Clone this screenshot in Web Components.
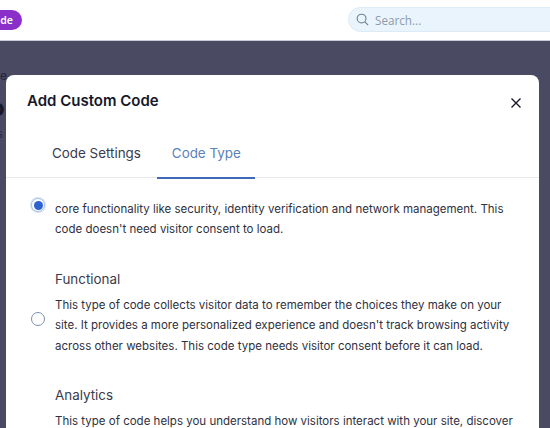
<!DOCTYPE html>
<html>
<head>
<meta charset="utf-8">
<style>
  html, body { margin: 0; height: 100%; overflow: hidden; background: #4a4b63; }
  body { font-family: Inter, "Liberation Sans", sans-serif; color: #2f3040; }
</style>
</head>
<body>
<app-topbar></app-topbar>
<app-backdrop>
  <code-modal heading="Add Custom Code">
    <code-option checked>core functionality like security, identity verification and network management. This code doesn't need visitor consent to load.</code-option>
    <code-option title="Functional">This type of code collects visitor data to remember the choices they make on your site. It provides a more personalized experience and doesn't track browsing activity across other websites. This code type needs visitor consent before it can load.</code-option>
    <code-option title="Analytics">This type of code helps you understand how visitors interact with your site, discover</code-option>
  </code-modal>
</app-backdrop>

<script>
class AppTopbar extends HTMLElement {
    constructor() {
        super();
        this.attachShadow({ mode: 'open' });
    }

    connectedCallback() {
        this.shadowRoot.innerHTML = `
            <style>
              :host { display: flex; align-items: center; justify-content: space-between; height: 40px; background: #fff; border-bottom: 1px solid #c9ccd6; overflow: hidden; box-sizing: content-box; }
              .upgrade { margin-left: -30px; width: 52px; height: 20px; box-sizing: border-box; padding-right: 9px; border-radius: 10px; background: #8a2fc9; color: #fff; font: 600 10.5px/20px "Noto Sans", sans-serif; text-align: right; }
              .search { display: flex; align-items: center; gap: 6px; width: 220px; height: 25px; margin-right: -18px; margin-top: -1px; box-sizing: border-box; padding-left: 7px; border: 1px solid #dcebf6; border-radius: 13px 0 0 13px; background: #eaf4fc; color: #8f9bab; font: 11.7px "Open Sans", sans-serif; }
              svg { display: block; }
            </style>
            <div class="upgrade">de</div>
            <div class="search">
                <svg width="13" height="13" viewBox="0 0 13 13" fill="none" stroke="#6f8191" stroke-width="1.1"><circle cx="5.6" cy="5.6" r="4.4"/><path d="M8.8 8.8l3.4 3.4"/></svg>
                <span>Search...</span>
            </div>
        `;
    }
}

class AppBackdrop extends HTMLElement {
    constructor() {
        super();
        this.attachShadow({ mode: 'open' });
    }

    connectedCallback() {
        this.shadowRoot.innerHTML = `
            <style>
              :host { display: block; position: relative; height: 387px; padding: 34px 11px 0 6px; box-sizing: border-box; background: #4a4b63; overflow: hidden; }
              .behind { position: absolute; white-space: nowrap; }
              .e { top: 27px; left: 0; font-size: 12px; color: #23243a; }
              .o { top: 52px; left: -10px; font-size: 24px; font-weight: 700; color: #16172a; }
              .s { top: 86px; left: -3px; font-size: 11px; color: #2a2b40; }
            </style>
            <span class="behind e">e</span>
            <span class="behind o">o</span>
            <span class="behind s">s</span>
            <slot></slot>
        `;
    }
}

class CodeModal extends HTMLElement {
    constructor() {
        super();
        this.attachShadow({ mode: 'open' });
    }

    connectedCallback() {
        this.shadowRoot.innerHTML = `
            <style>
              :host { display: block; position: relative; height: 420px; background: #fff; border-radius: 8px 8px 0 0; }
              header { display: flex; justify-content: space-between; padding: 16px 17px 0 21px; height: 46px; box-sizing: border-box; }
              h2 { margin: 0; font: 600 15px/20px Inter, sans-serif; color: #16172a; }
              .close { margin-top: 6px; }
              nav { display: flex; height: 57px; padding-left: 30px; border-bottom: 1.5px solid #e8e9ec; box-sizing: border-box; }
              .tab { padding: 22px 16px 0; font: 400 13.4px/20px Inter, sans-serif; color: #3a3b4c; margin-bottom: -1.5px; }
              .tab.on { padding: 22px 14px 0 15px; color: #5a82b8; border-bottom: 2px solid #3f69bb; }
              .body { padding-top: 21px; }
              ::slotted(code-option) { margin-bottom: 29px; }
            </style>
            <header>
                <h2>${this.getAttribute('heading')}</h2>
                <svg class="close" width="12" height="12" viewBox="0 0 12 12" fill="none" stroke="#16172a" stroke-width="1.4"><path d="M1.5 1.5l9 9M10.5 1.5l-9 9"/></svg>
            </header>
            <nav>
                <div class="tab">Code Settings</div>
                <div class="tab on">Code Type</div>
            </nav>
            <div class="body"><slot></slot></div>
        `;
    }
}

class CodeOption extends HTMLElement {
    constructor() {
        super();
        this.attachShadow({ mode: 'open' });
    }

    connectedCallback() {
        const title = this.getAttribute('title');
        const checked = this.hasAttribute('checked');
        this.removeAttribute('title');
        this.shadowRoot.innerHTML = `
            <style>
              :host { display: grid; grid-template-columns: 49px 1fr; padding-right: 22px; }
              .radio { position: relative; box-sizing: border-box; width: 14px; height: 14px; margin: 14px 0 0 25px; border-radius: 50%; border: 1px solid #7a8fb0; background: #fff; align-self: center; }
              .radio.on { align-self: start; margin-top: -1px; border-color: #a9c0e4; box-shadow: 0 0 0 1px #d8e3f4; }
              .radio.on::after { content: ""; position: absolute; inset: 1.5px; border-radius: 50%; background: #2f62d0; }
              h3 { margin: 0 0 6px; font: 400 13.4px/20px Inter, sans-serif; color: #3a3b4c; }
              h3 + p { min-height: 61.2px; }
              p { margin: 0; font: 400 11.5px/20.4px Inter, sans-serif; color: #2f3040; }
            </style>
            <div class="radio ${checked ? 'on' : ''}"></div>
            <div>
                ${title ? `<h3>${title}</h3>` : ''}
                <p><slot></slot></p>
            </div>
        `;
    }
}

customElements.define('app-topbar', AppTopbar);
customElements.define('app-backdrop', AppBackdrop);
customElements.define('code-modal', CodeModal);
customElements.define('code-option', CodeOption);
</script>
</body>
</html>
